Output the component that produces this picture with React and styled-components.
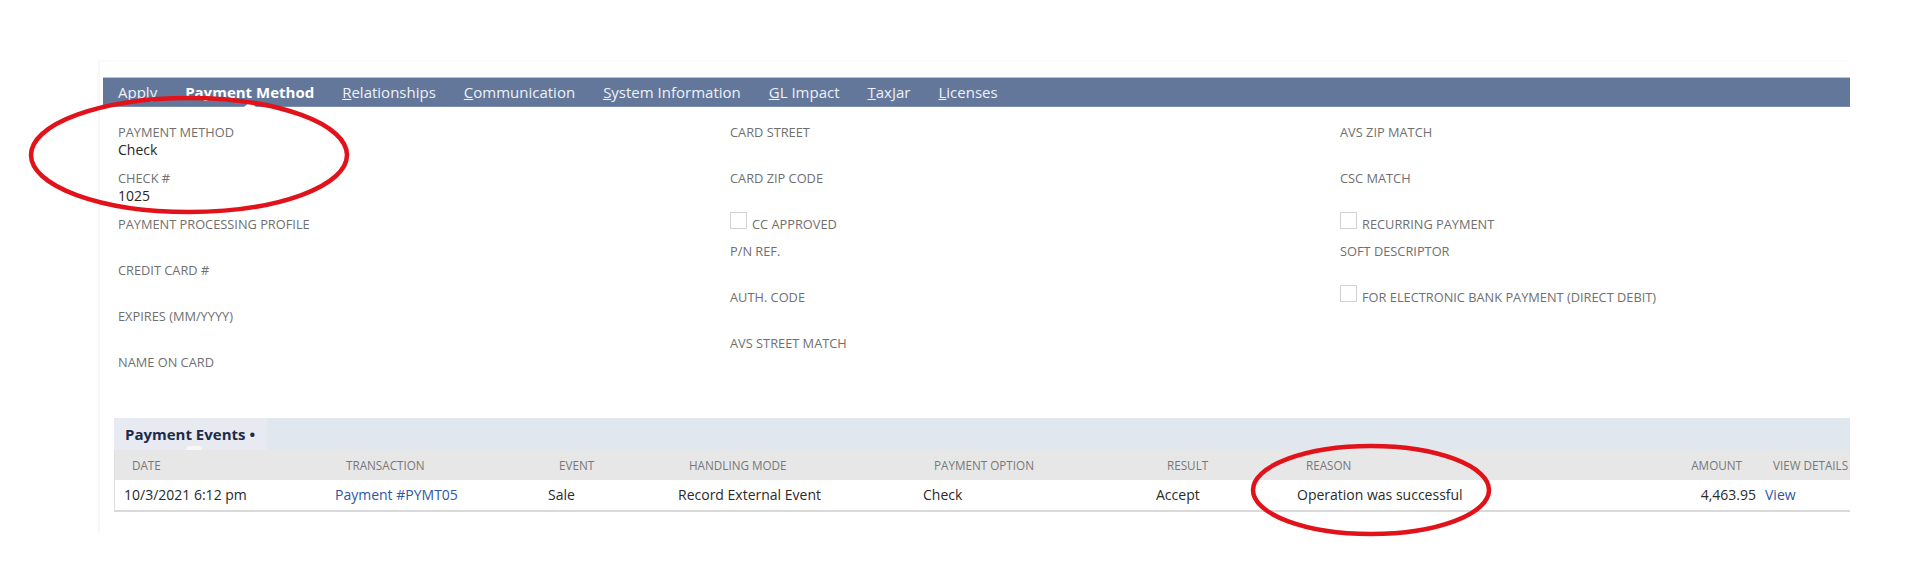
import React from 'react';
import styled, { createGlobalStyle, css } from 'styled-components';

const Global = createGlobalStyle`
  html, body { margin: 0; padding: 0; background: #fff; }
  body { font-family: "Open Sans", "Noto Sans", sans-serif; }
  #root { width: 1920px; }
`;

const Page = styled.div`
  position: relative;
  width: 1920px;
  height: 584px;
  padding: 62px 0 0 100px;
  box-sizing: border-box;
  overflow: hidden;
`;

const Panel = styled.div`
  width: 1750px;
  padding: 15px 0 23px 3px;
  box-sizing: border-box;
  box-shadow: -2px -1px 3px rgba(0, 0, 0, 0.045);
`;

const TabBar = styled.nav`
  display: flex;
  align-items: center;
  height: 30px;
  box-sizing: border-box;
  padding-left: 1px;
  background: #62779a;
  border-top: 1px solid #b8c3d8;
  border-bottom: 1px solid #7d8fae;
`;

const Tab = styled.span`
  position: relative;
  padding: 0 14px;
  font-size: 15px;
  line-height: 28px;
  white-space: nowrap;
  color: ${(p) => (p.$active ? '#ffffff' : '#eef2f8')};
  font-weight: ${(p) => (p.$active ? 700 : 400)};
  ${(p) =>
    p.$active &&
    css`
      &::after {
        content: '';
        position: absolute;
        left: 50%;
        bottom: -1px;
        margin-left: -6px;
        border-left: 6px solid transparent;
        border-right: 6px solid transparent;
        border-bottom: 5px solid #ffffff;
      }
    `}
`;

const FieldGrid = styled.div`
  display: grid;
  grid-template-columns: 612px 610px 1fr;
  padding: 16px 0 0 15px;
`;

const Column = styled.div`
  display: flex;
  flex-direction: column;
`;

const Field = styled.div`
  padding-bottom: 10px;
`;

const Label = styled.div`
  font-size: 12.8px;
  line-height: 18px;
  color: #707070;
  text-transform: uppercase;
  white-space: nowrap;
`;

const Value = styled.div`
  font-size: 14px;
  line-height: 18px;
  min-height: 18px;
  color: #262626;
`;

const CheckField = styled.div`
  display: flex;
  align-items: flex-start;
  gap: 5px;
  height: 18px;
  padding-bottom: 9px;
  font-size: 12.8px;
  line-height: 18px;
  color: #707070;
  text-transform: uppercase;
  white-space: nowrap;
`;

const Box = styled.span`
  flex: none;
  width: 17px;
  height: 17px;
  margin-top: -3px;
  box-sizing: border-box;
  border: 1px solid #d2d2d2;
  background: #fff;
`;

const Events = styled.section`
  margin: 19px 0 0 11px;
  width: 1736px;
`;

const EventsHead = styled.div`
  display: flex;
  height: 32px;
  background: #e1e7ef;
`;

const EventsTab = styled.div`
  position: relative;
  padding: 0 12px 0 11px;
  background: #e7eaf0;
  font-size: 15px;
  font-weight: 700;
  line-height: 32px;
  color: #1d2b4b;
  &::after {
    content: '';
    position: absolute;
    left: 72px;
    bottom: 0;
    width: 16px;
    height: 4px;
    border-radius: 8px 8px 0 0;
    background: #f7f7f7;
  }
`;

const Table = styled.div`
  display: grid;
  grid-template-columns: 211px 213px 130px 245px 233px 141px 1fr 110px 90px;
  border-left: 1px solid #dedede;
  border-bottom: 2px solid #d9d9d9;
`;

const HeadCell = styled.div`
  height: 30px;
  line-height: 30px;
  background: #e7e7e7;
  font-size: 11.7px;
  color: #777;
  text-transform: uppercase;
  white-space: nowrap;
  padding-left: ${(p) => p.$pl ?? 20}px;
  padding-right: ${(p) => p.$pr ?? 0}px;
  text-align: ${(p) => p.$align || 'left'};
`;

const Cell = styled.div`
  height: 30px;
  line-height: 30px;
  font-size: 14px;
  color: ${(p) => (p.$link ? '#2d57a3' : '#2a2a2a')};
  white-space: nowrap;
  padding-left: ${(p) => p.$pl ?? 9}px;
  padding-right: ${(p) => p.$pr ?? 0}px;
  text-align: ${(p) => p.$align || 'left'};
`;

const Marks = styled.svg`
  position: absolute;
  left: 0;
  top: 0;
  pointer-events: none;
`;

const tabs = [
  { key: '', rest: 'Apply' },
  { key: 'P', rest: 'ayment Method', active: true },
  { key: 'R', rest: 'elationships' },
  { key: 'C', rest: 'ommunication' },
  { key: 'S', rest: 'ystem Information' },
  { key: 'G', rest: 'L Impact' },
  { key: 'T', rest: 'axJar' },
  { key: 'L', rest: 'icenses' },
];

const col1 = [
  { label: 'Payment Method', value: 'Check' },
  { label: 'Check #', value: '1025' },
  { label: 'Payment Processing Profile' },
  { label: 'Credit Card #' },
  { label: 'Expires (MM/YYYY)' },
  { label: 'Name on Card' },
];

const col2 = [
  { label: 'Card Street' },
  { label: 'Card Zip Code' },
  { label: 'CC Approved', check: true },
  { label: 'P/N Ref.' },
  { label: 'Auth. Code' },
  { label: 'AVS Street Match' },
];

const col3 = [
  { label: 'AVS Zip Match' },
  { label: 'CSC Match' },
  { label: 'Recurring Payment', check: true },
  { label: 'Soft Descriptor' },
  { label: 'For Electronic Bank Payment (Direct Debit)', check: true },
];

function FieldColumn({ items }) {
  return (
    <Column>
      {items.map((f) =>
        f.check ? (
          <CheckField key={f.label}>
            <Box />
            <span>{f.label}</span>
          </CheckField>
        ) : (
          <Field key={f.label}>
            <Label>{f.label}</Label>
            <Value>{f.value || ''}</Value>
          </Field>
        )
      )}
    </Column>
  );
}

export default function App() {
  return (
    <>
      <Global />
      <Page>
        <Panel>
          <TabBar>
            {tabs.map((t) => (
              <Tab key={t.rest} $active={t.active}>
                {t.key && <u>{t.key}</u>}
                {t.rest}
              </Tab>
            ))}
          </TabBar>
          <FieldGrid>
            <FieldColumn items={col1} />
            <FieldColumn items={col2} />
            <FieldColumn items={col3} />
          </FieldGrid>
          <Events>
            <EventsHead>
              <EventsTab>Payment Events •</EventsTab>
            </EventsHead>
            <Table>
              <HeadCell $pl={17}>Date</HeadCell>
              <HeadCell>Transaction</HeadCell>
              <HeadCell>Event</HeadCell>
              <HeadCell>Handling Mode</HeadCell>
              <HeadCell>Payment Option</HeadCell>
              <HeadCell>Result</HeadCell>
              <HeadCell $pl={18}>Reason</HeadCell>
              <HeadCell $align="right" $pl={0} $pr={18}>Amount</HeadCell>
              <HeadCell $pl={13}>View Details</HeadCell>
              <Cell>10/3/2021 6:12 pm</Cell>
              <Cell $link>Payment #PYMT05</Cell>
              <Cell>Sale</Cell>
              <Cell>Record External Event</Cell>
              <Cell>Check</Cell>
              <Cell>Accept</Cell>
              <Cell>Operation was successful</Cell>
              <Cell $align="right" $pl={0} $pr={4}>4,463.95</Cell>
              <Cell $link $pl={5}>View</Cell>
            </Table>
          </Events>
        </Panel>
        <Marks width="1920" height="584" viewBox="0 0 1920 584">
          <ellipse cx="189" cy="155" rx="158" ry="57" fill="none" stroke="#e2121b" strokeWidth="4.5" />
          <ellipse cx="1371" cy="490" rx="118" ry="44" fill="none" stroke="#e2121b" strokeWidth="4.5" />
        </Marks>
      </Page>
    </>
  );
}
